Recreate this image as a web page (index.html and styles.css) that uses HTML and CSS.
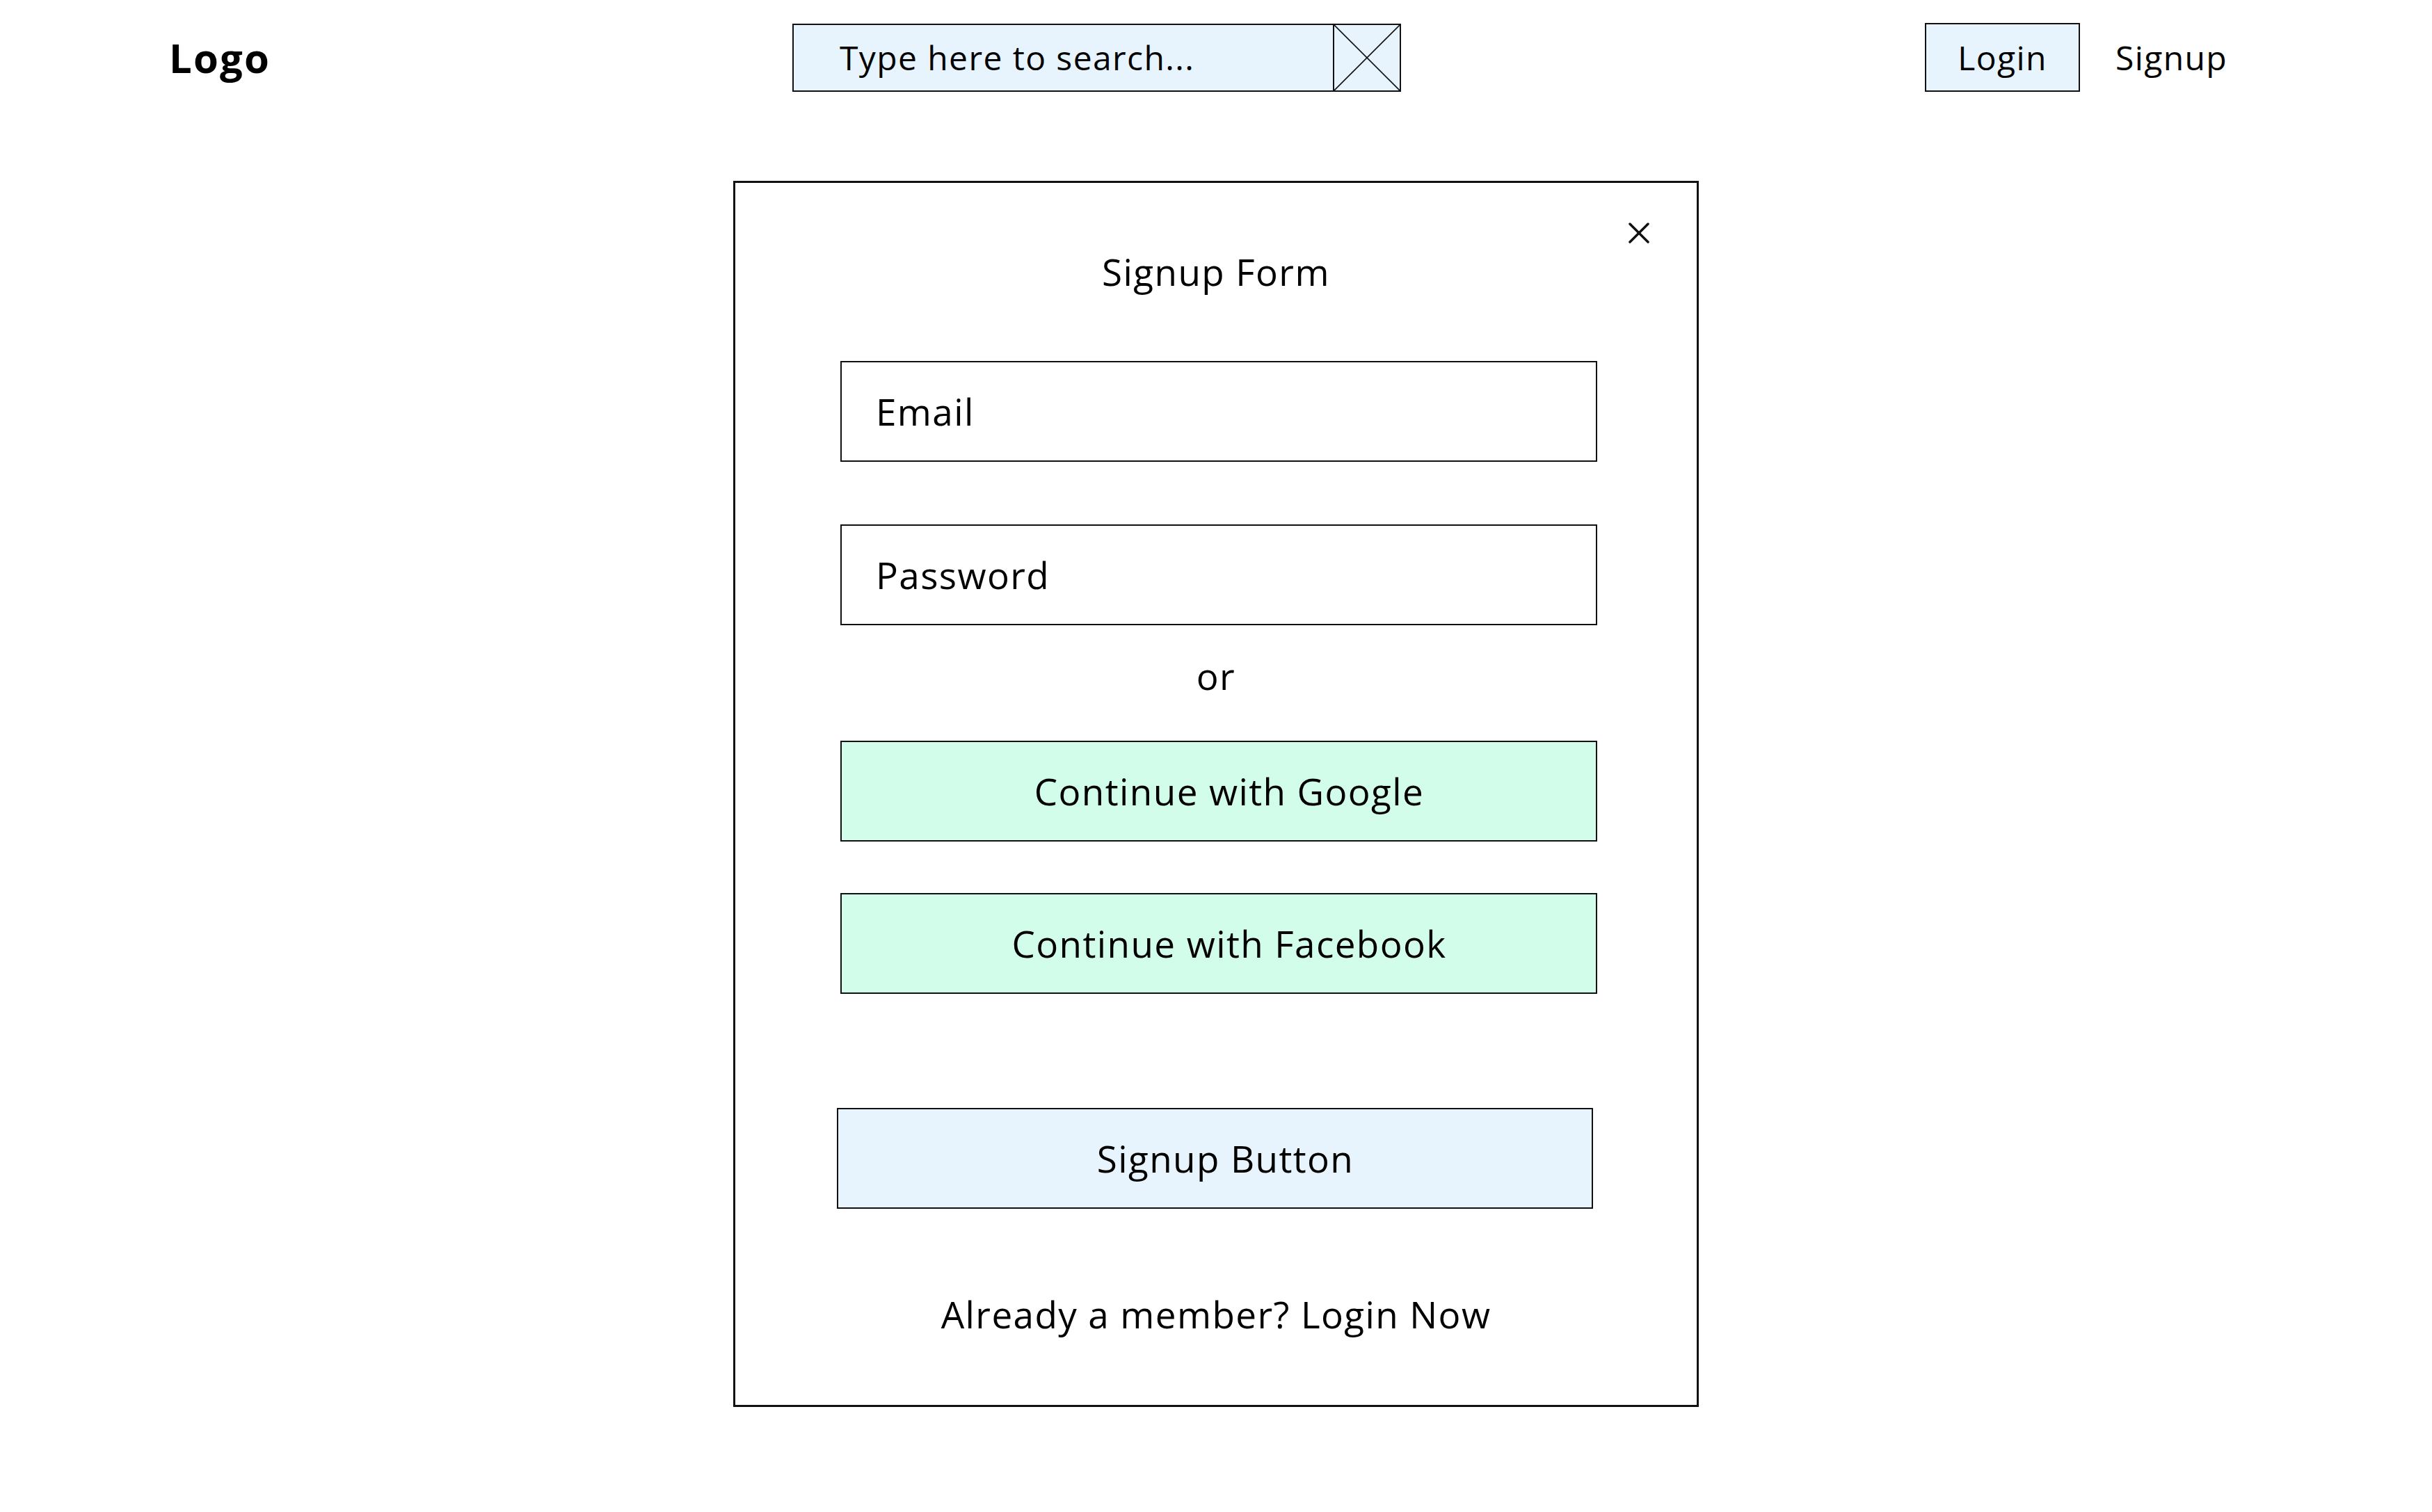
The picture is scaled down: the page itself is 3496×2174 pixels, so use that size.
FILE: index.html
```html
<!DOCTYPE html>
<html lang="en">
<head>
<meta charset="utf-8">
<title>Signup Form</title>
<link rel="stylesheet" href="styles.css">
</head>
<body>
<header class="topbar">
  <div class="brand">Logo</div>
  <div class="search">
    <span class="search-text">Type here to search...</span>
    <span class="search-icon">
      <svg viewBox="0 0 96 96" preserveAspectRatio="none" aria-hidden="true">
        <line x1="0" y1="0" x2="96" y2="96"></line>
        <line x1="96" y1="0" x2="0" y2="96"></line>
      </svg>
    </span>
  </div>
  <nav class="auth">
    <a class="btn-login">Login</a>
    <a class="link-signup">Signup</a>
  </nav>
</header>
<main class="stage">
  <section class="modal">
    <button class="close" aria-label="Close">
      <svg viewBox="0 0 30 30" aria-hidden="true">
        <line x1="2" y1="2" x2="28" y2="28"></line>
        <line x1="28" y1="2" x2="2" y2="28"></line>
      </svg>
    </button>
    <h1 class="title">Signup Form</h1>
    <div class="field field-email">Email</div>
    <div class="field field-password">Password</div>
    <div class="or">or</div>
    <div class="social social-google">Continue with Google</div>
    <div class="social social-facebook">Continue with Facebook</div>
    <div class="submit">Signup Button</div>
    <div class="switch">Already a member? Login Now</div>
  </section>
</main>
</body>
</html>
```
FILE: styles.css
```css
html, body {
  margin: 0;
  padding: 0;
  background: #ffffff;
}

body {
  font-family: "Open Sans", "Liberation Sans", sans-serif;
  color: #000000;
  letter-spacing: 1.4px;
}

/* ---------- top bar ---------- */
.topbar {
  display: flex;
  align-items: center;
  padding-top: 33px;
}

.brand {
  flex: 0 0 auto;
  width: 1139px;
  box-sizing: border-box;
  padding-left: 243px;
  font-size: 58px;
  font-weight: 700;
  line-height: 98px;
  letter-spacing: 2.2px;
}

.search {
  flex: 0 0 auto;
  width: 875px;
  height: 98px;
  box-sizing: border-box;
  border: 2px solid #111111;
  background: #e7f4fd;
  display: flex;
  align-items: stretch;
}

.search-text {
  flex: 1;
  padding-left: 66px;
  display: flex;
  align-items: center;
  font-size: 48px;
}

.search-icon {
  width: 96px;
  box-sizing: border-box;
  border-left: 2px solid #111111;
  display: block;
}

.search-icon svg {
  display: block;
  width: 100%;
  height: 100%;
}

.search-icon line {
  stroke: #111111;
  stroke-width: 1.6;
  vector-effect: non-scaling-stroke;
}

.auth {
  flex: 0 0 auto;
  margin-left: 753px;
  display: flex;
  align-items: center;
}

.btn-login {
  width: 223px;
  height: 99px;
  box-sizing: border-box;
  border: 2px solid #111111;
  background: #e7f4fd;
  display: flex;
  align-items: center;
  justify-content: center;
  font-size: 48px;
}

.link-signup {
  margin-left: 51px;
  font-size: 48px;
}

/* ---------- modal ---------- */
.modal {
  position: relative;
  width: 1388px;
  box-sizing: border-box;
  margin: 128px auto 0;
  border: 3px solid #111111;
  padding: 92px 147px 94px;
  display: flex;
  flex-direction: column;
  align-items: flex-start;
  font-size: 53px;
}

.close {
  position: absolute;
  top: 57px;
  right: 68px;
  width: 30px;
  height: 30px;
  padding: 0;
  border: 0;
  background: none;
}

.close svg {
  display: block;
  width: 30px;
  height: 30px;
}

.close line {
  stroke: #111111;
  stroke-width: 3.5;
  stroke-linecap: round;
}

.title {
  align-self: stretch;
  margin: 0;
  text-align: center;
  font-size: 53px;
  font-weight: 400;
  line-height: 72px;
}

.field {
  width: 1088px;
  height: 145px;
  box-sizing: border-box;
  margin-left: 4px;
  border: 2px solid #111111;
  background: #ffffff;
  padding-left: 49px;
  display: flex;
  align-items: center;
}

.field-email {
  margin-top: 92px;
}

.field-password {
  margin-top: 90px;
}

.or {
  align-self: stretch;
  margin-top: 37px;
  text-align: center;
  line-height: 72px;
}

.social {
  width: 1088px;
  height: 145px;
  box-sizing: border-box;
  margin-left: 4px;
  border: 2px solid #111111;
  background: #d1fdea;
  padding-left: 30px;
  display: flex;
  align-items: center;
  justify-content: center;
}

.social-google {
  margin-top: 57px;
}

.social-facebook {
  margin-top: 74px;
}

.submit {
  width: 1087px;
  height: 145px;
  box-sizing: border-box;
  margin-left: -1px;
  margin-top: 164px;
  border: 2px solid #111111;
  background: #e7f4fd;
  padding-left: 30px;
  display: flex;
  align-items: center;
  justify-content: center;
}

.switch {
  align-self: stretch;
  margin-top: 116px;
  text-align: center;
  line-height: 72px;
}
```
